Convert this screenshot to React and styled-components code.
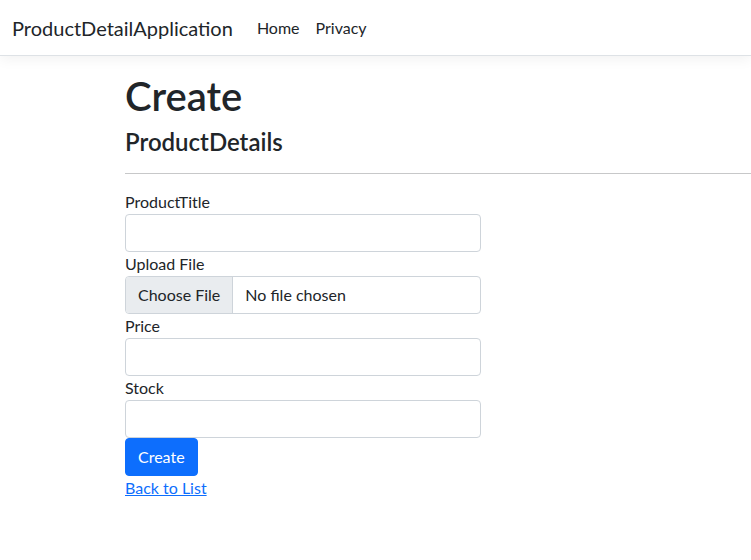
import React from "react";
import styled, { createGlobalStyle } from "styled-components";

const GlobalStyle = createGlobalStyle`
  html, body { margin: 0; padding: 0; background: #fff; }
  body {
    font-family: Lato, "Noto Sans", sans-serif;
    font-size: 16px;
    line-height: 1.5;
    color: #212529;
    overflow-x: hidden;
  }
  * { box-sizing: border-box; }
`;

const Navbar = styled.header`
  height: 56px;
  display: flex;
  align-items: center;
  padding: 0 12px;
  background: #fff;
  border-bottom: 1px solid #dee2e6;
  box-shadow: 0 4px 12px rgba(0, 0, 0, 0.05);
  margin-bottom: 16px;
`;

const Brand = styled.a`
  font-size: 20px;
  line-height: 30px;
  color: #212529;
  text-decoration: none;
  margin-right: 16px;
  padding: 5px 0;
`;

const NavList = styled.nav`
  display: flex;
`;

const NavLink = styled.a`
  font-size: 16px;
  color: #212529;
  text-decoration: none;
  padding: 8px;
`;

const Main = styled.main`
  padding-left: 125px;
  padding-bottom: 16px;
`;

const Title = styled.h1`
  font-size: 40px;
  font-weight: 600;
  line-height: 1.2;
  margin: 0 0 8px;
`;

const Subtitle = styled.h4`
  font-size: 24px;
  font-weight: 600;
  line-height: 1.2;
  margin: 0 0 8px;
`;

const Rule = styled.hr`
  margin: 16px 0;
  border: 0;
  height: 1px;
  background: #212529;
  opacity: 0.25;
`;

const Form = styled.form`
  width: 356px;
  display: flex;
  flex-direction: column;
  align-items: flex-start;
`;

const Label = styled.label`
  display: block;
  font-size: 16px;
  line-height: 24px;
`;

const Input = styled.input`
  display: block;
  width: 100%;
  height: 38px;
  padding: 6px 12px;
  font: inherit;
  color: #212529;
  background: #fff;
  border: 1px solid #ced4da;
  border-radius: 4px;
  outline: none;
`;

const FileBox = styled.div`
  display: flex;
  align-items: center;
  width: 100%;
  height: 38px;
  border: 1px solid #ced4da;
  border-radius: 4px;
  overflow: hidden;
`;

const FileButton = styled.span`
  height: 100%;
  display: flex;
  align-items: center;
  padding: 0 12px;
  background: #e9ecef;
  border-right: 1px solid #ced4da;
  color: #212529;
`;

const FileText = styled.span`
  padding-left: 12px;
`;

const Button = styled.button`
  font: inherit;
  font-size: 16px;
  line-height: 24px;
  padding: 6px 12px;
  color: #fff;
  background: #0d6efd;
  border: 1px solid #0d6efd;
  border-radius: 4px;
  cursor: pointer;
`;

const BackLink = styled.a`
  color: #0d6efd;
  text-decoration: underline;
  line-height: 24px;
`;

export default function App() {
  return (
    <>
      <GlobalStyle />
      <Navbar>
        <Brand href="#">ProductDetailApplication</Brand>
        <NavList>
          <NavLink href="#">Home</NavLink>
          <NavLink href="#">Privacy</NavLink>
        </NavList>
      </Navbar>
      <Main>
        <Title>Create</Title>
        <Subtitle>ProductDetails</Subtitle>
        <Rule />
        <Form onSubmit={(e) => e.preventDefault()}>
          <Label htmlFor="title">ProductTitle</Label>
          <Input id="title" type="text" />
          <Label>Upload File</Label>
          <FileBox>
            <FileButton>Choose File</FileButton>
            <FileText>No file chosen</FileText>
          </FileBox>
          <Label htmlFor="price">Price</Label>
          <Input id="price" type="text" />
          <Label htmlFor="stock">Stock</Label>
          <Input id="stock" type="text" />
          <Button type="submit">Create</Button>
          <BackLink href="#">Back to List</BackLink>
        </Form>
      </Main>
    </>
  );
}
